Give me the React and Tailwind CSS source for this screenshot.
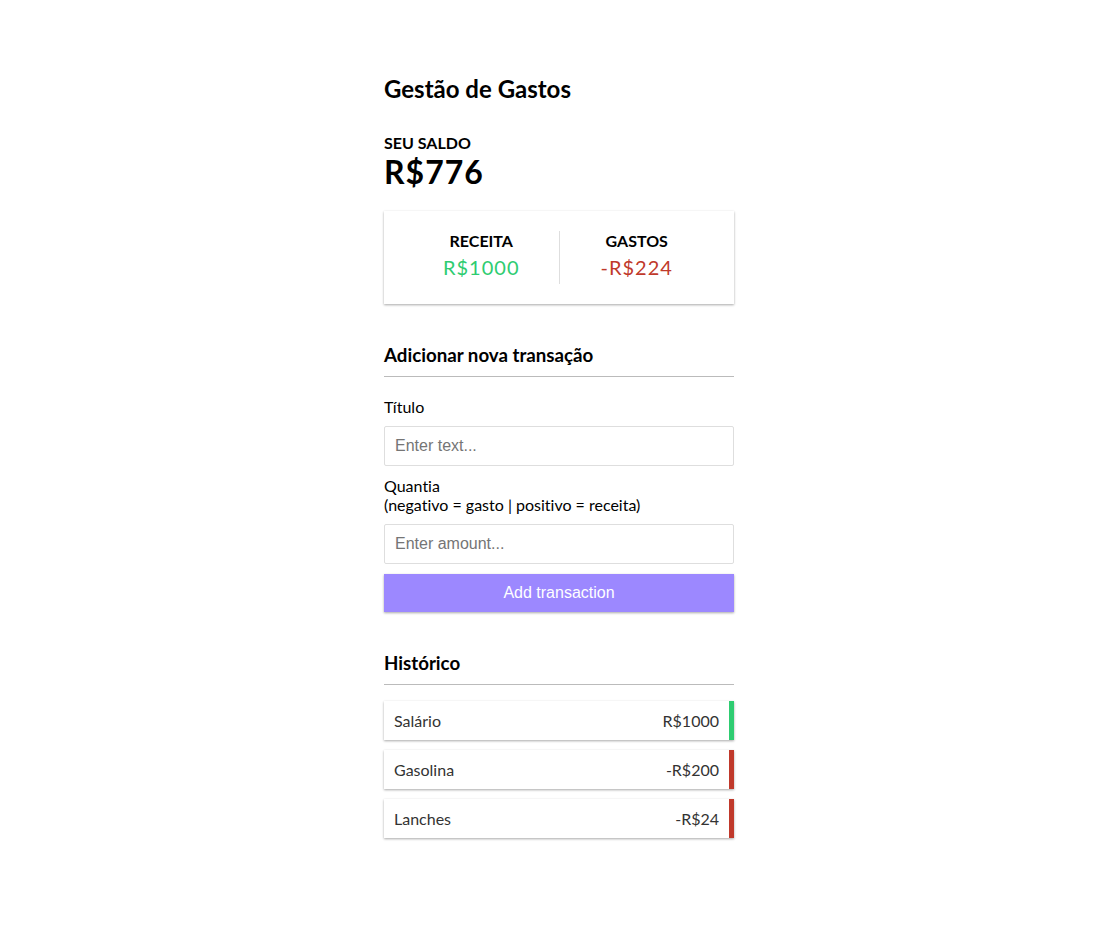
export default function App() {
  const shadow = "shadow-[0_1px_3px_rgba(0,0,0,0.12),0_1px_2px_rgba(0,0,0,0.24)]";
  const items = [
    { t: "Salário", v: "R$1000", plus: true },
    { t: "Gasolina", v: "-R$200", plus: false },
    { t: "Lanches", v: "-R$24", plus: false },
  ];
  return (
    <div className="min-h-[927px] bg-white font-['Lato','Liberation_Sans',sans-serif] leading-[normal] [font-variant-ligatures:none] text-black flex justify-center pl-[11px] pt-[74px]">
      <div className="w-[350px] block">
        <h2 className="text-[24px] font-bold m-0">Gestão de Gastos</h2>
        <div className="mt-[30px]">
          <h4 className="text-[16px] font-bold uppercase m-0">Seu Saldo</h4>
          <h1 className="text-[32px] font-bold tracking-[1px] m-0">R$776</h1>
        </div>
        <div className={`bg-white ${shadow} p-5 flex justify-between my-5`}>
          <div className="flex-1 text-center border-r border-[#dedede]">
            <h4 className="text-[16px] font-bold uppercase m-0">Receita</h4>
            <p className="text-[20px] tracking-[1px] my-[5px] text-[#2ecc71]">R$1000</p>
          </div>
          <div className="flex-1 text-center">
            <h4 className="text-[16px] font-bold uppercase m-0">Gastos</h4>
            <p className="text-[20px] tracking-[1px] my-[5px] text-[#c0392b]">-R$224</p>
          </div>
        </div>
        <h3 className="text-[18.72px] font-bold border-b border-[#bbb] pb-[10px] mt-10 mb-[10px]">Adicionar nova transação</h3>
        <form onSubmit={(e) => e.preventDefault()}>
          <div>
            <label className="inline-block my-[10px] text-[16px]">Título</label>
            <input
              type="text"
              placeholder="Enter text..."
              className="block w-full border border-[#dedede] rounded-[2px] p-[10px] text-[16px] font-['Liberation_Sans',Arial,sans-serif] leading-[normal] placeholder:text-[#757575] outline-none"
            />
          </div>
          <div>
            <label className="inline-block my-[10px] text-[16px]">
              Quantia <br />
              (negativo = gasto | positivo = receita)
            </label>
            <input
              type="number"
              placeholder="Enter amount..."
              className="block w-full border border-[#dedede] rounded-[2px] p-[10px] text-[16px] font-['Liberation_Sans',Arial,sans-serif] leading-[normal] placeholder:text-[#757575] outline-none [appearance:textfield]"
            />
          </div>
          <button
            className={`block w-full bg-[#9c88ff] ${shadow} text-white border-0 text-[16px] mt-[10px] mb-[30px] p-[10px] font-['Liberation_Sans',Arial,sans-serif] leading-[normal] cursor-pointer`}
          >
            Add transaction
          </button>
        </form>
        <h3 className="text-[18.72px] font-bold border-b border-[#bbb] pb-[10px] mt-10 mb-[10px]">Histórico</h3>
        <ul className="list-none p-0 mt-4 mb-10">
          {items.map((it) => (
            <li
              key={it.t}
              className={`bg-white ${shadow} text-[#333] flex justify-between p-[10px] my-[10px] text-[16px] border-r-[5px] ${it.plus ? "border-[#2ecc71]" : "border-[#c0392b]"}`}
            >
              {it.t} <span>{it.v}</span>
            </li>
          ))}
        </ul>
      </div>
    </div>
  );
}
